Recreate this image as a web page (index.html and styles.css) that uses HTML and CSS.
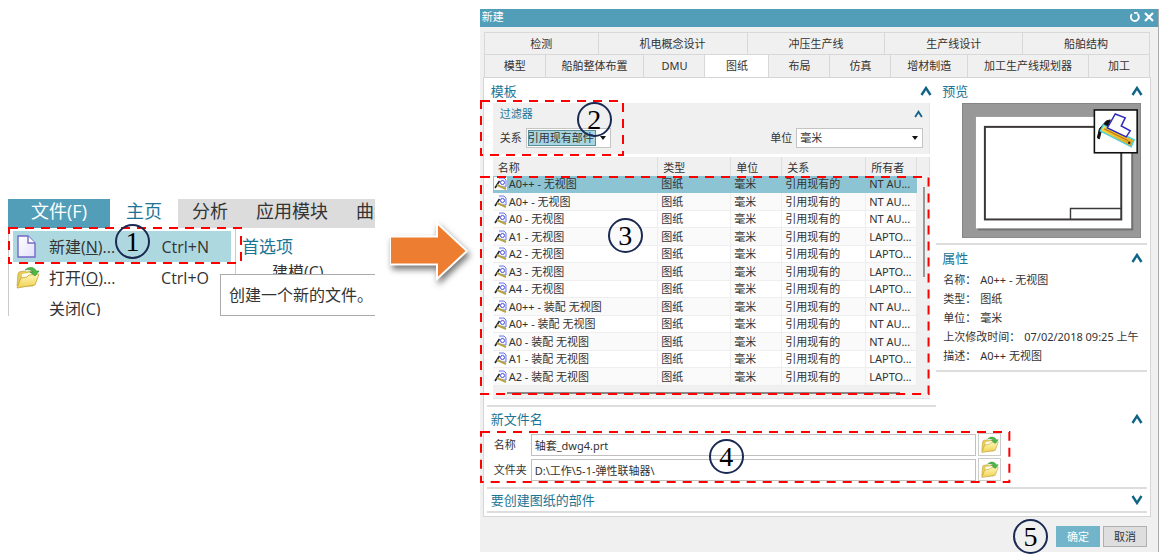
FILE: index.html
```html
<!DOCTYPE html>
<html lang="zh-CN">
<head>
<meta charset="utf-8">
<title>新建</title>
<link rel="stylesheet" href="styles.css">
</head>
<body>
<svg class="defs" width="0" height="0" aria-hidden="true">
  <defs>
    <linearGradient id="gold" x1="0" y1="0" x2="0" y2="1"><stop offset="0" stop-color="#fff8b8"/><stop offset="1" stop-color="#f0d050"/></linearGradient>
    <linearGradient id="ruler" x1="0" y1="0" x2="0" y2="1"><stop offset="0" stop-color="#ffe84a"/><stop offset="1" stop-color="#e09a18"/></linearGradient>
    <linearGradient id="paper" x1="0" y1="0" x2="1" y2="1"><stop offset="0" stop-color="#ffffff"/><stop offset="1" stop-color="#e2e0fb"/></linearGradient>
  </defs>
  <symbol id="folder" viewBox="0 0 24 24">
    <path d="M1 20L2 8l1-2 5-1 2 1 8-1-1 15z" fill="#e6cc58" stroke="#c0a03a" stroke-width=".7"/>
    <path d="M6 8l12-2v9H6z" fill="#fffde8"/>
    <path d="M1 22L5 12l6-1 2-2 10-1-4 11z" fill="url(#gold)" stroke="#c4a43a" stroke-width=".8"/>
    <path d="M9 4c4-4 10-3 11 1h3l-4 5-5-4h3c-1-2-5-3-8-2z" fill="#4db848" stroke="#2b8a30" stroke-width=".6"/>
  </symbol>
  <symbol id="up" viewBox="0 0 12 10"><path d="M1.500 9L6 2l4.500 7" fill="none" stroke="#0f6488" stroke-width="2.400"/></symbol>
  <symbol id="down" viewBox="0 0 12 10"><path d="M1.500 1L6 8l4.500-7" fill="none" stroke="#0f6488" stroke-width="2.400"/></symbol>
  <symbol id="sheet" viewBox="0 0 13 13">
    <path d="M5 1h5l2 2v7H7" fill="#eef0ff" stroke="#6a78e8"/>
    <circle cx="8.500" cy="5.500" r="2" fill="#fff" stroke="#4a50e0"/>
    <path d="M1 11L5.500 4" stroke="#222" stroke-width="1.600"/>
    <path d="M3 8l9 4" stroke="#b5a545" stroke-width="2"/>
  </symbol>
  <symbol id="caret" viewBox="0 0 6 4"><path d="M0 0h6L3 4z" fill="#111"/></symbol>
</svg>

<main class="stage">
  <section class="app">
    <div class="crop">
      <nav class="ribbon">
        <button class="ribbon-tab file">文件(F)</button>
        <button class="ribbon-tab home">主页</button>
        <button class="ribbon-tab">分析</button>
        <button class="ribbon-tab">应用模块</button>
        <button class="ribbon-tab">曲线</button>
      </nav>
      <div class="app-body">
        <div class="menu">
          <button class="menu-item current">
            <svg class="menu-icon" viewBox="0 0 24 24"><path d="M2 1h10l7 7v14H2z" fill="url(#paper)" stroke="#7468c8" stroke-width="1.400"/><path d="M12 1v7h7" fill="#fff" stroke="#7468c8" stroke-width="1.400"/></svg>
            <span class="menu-label">新建(<u>N</u>)...</span><span>Ctrl+N</span>
          </button>
          <button class="menu-item">
            <svg class="menu-icon"><use href="#folder"/></svg>
            <span class="menu-label">打开(<u>O</u>)...</span><span>Ctrl+O</span>
          </button>
          <button class="menu-item"><span class="menu-icon"></span><span class="menu-label">关闭(C)</span></button>
          <div class="mark mark-menu"><svg class="dash"><rect x="1" y="1"/></svg><span class="badge">1</span></div>
        </div>
        <div class="submenu">
          <h2>首选项</h2>
          <p>建模(C)</p>
        </div>
      </div>
      <div class="tooltip" role="tooltip">创建一个新的文件。</div>
    </div>
  </section>

  <svg class="arrow" viewBox="0 0 80 68"><path d="M0 15.500h47V2l30 28-30 28V43.500H0z" fill="#ed7d31" stroke="#fff" stroke-width="2"/></svg>

  <section class="dialog">
    <header class="titlebar">
      <h1>新建</h1>
      <button aria-label="重置"><svg viewBox="0 0 12 12"><path d="M3 3.200A4 4 0 1 0 8.500 3M5 1.800H8.700" fill="none" stroke="#fff" stroke-width="1.800"/></svg></button>
      <button aria-label="关闭"><svg viewBox="0 0 12 12"><path d="M2 2l8 8M10 2l-8 8" stroke="#fff" stroke-width="2.200"/></svg></button>
    </header>
    <div class="tabs">
      <div class="tab-row upper">
        <button>检测</button><button>机电概念设计</button><button>冲压生产线</button><button>生产线设计</button><button>船舶结构</button>
      </div>
      <div class="tab-row">
        <button>模型</button><button>船舶整体布置</button><button>DMU</button><button class="active">图纸</button><button>布局</button><button>仿真</button><button>增材制造</button><button>加工生产线规划器</button><button>加工</button>
      </div>
    </div>
    <div class="panel">
      <div class="columns">
        <div class="left">
          <div class="section-head"><h2>模板</h2><svg><use href="#up"/></svg></div>
          <div class="filter">
            <div class="filter-head"><h3>过滤器</h3><svg><use href="#up"/></svg></div>
            <div class="filter-row">
              <label for="rel">关系</label>
              <span class="combo picked"><select id="rel"><option>引用现有部件</option></select><svg><use href="#caret"/></svg></span>
              <label for="unit" class="push">单位</label>
              <span class="combo unit"><select id="unit"><option>毫米</option></select><svg><use href="#caret"/></svg></span>
            </div>
            <div class="mark mark-filter"><svg class="dash"><rect x="1" y="1"/></svg><span class="badge">2</span></div>
          </div>
          <div class="list">
            <table>
              <colgroup><col><col class="c-type"><col class="c-unit"><col class="c-rel"><col class="c-owner"><col class="c-bar"></colgroup>
              <thead><tr><th>名称</th><th>类型</th><th>单位</th><th>关系</th><th>所有者</th><th></th></tr></thead>
              <tbody>
                <tr class="selected"><td><svg><use href="#sheet"/></svg>A0++ - 无视图</td><td>图纸</td><td>毫米</td><td>引用现有的</td><td>NT AU...</td><td class="track" rowspan="12"><div class="thumb"></div></td></tr>
                <tr><td><svg><use href="#sheet"/></svg>A0+ - 无视图</td><td>图纸</td><td>毫米</td><td>引用现有的</td><td>NT AU...</td></tr>
                <tr><td><svg><use href="#sheet"/></svg>A0 - 无视图</td><td>图纸</td><td>毫米</td><td>引用现有的</td><td>NT AU...</td></tr>
                <tr><td><svg><use href="#sheet"/></svg>A1 - 无视图</td><td>图纸</td><td>毫米</td><td>引用现有的</td><td>LAPTO...</td></tr>
                <tr><td><svg><use href="#sheet"/></svg>A2 - 无视图</td><td>图纸</td><td>毫米</td><td>引用现有的</td><td>LAPTO...</td></tr>
                <tr><td><svg><use href="#sheet"/></svg>A3 - 无视图</td><td>图纸</td><td>毫米</td><td>引用现有的</td><td>LAPTO...</td></tr>
                <tr><td><svg><use href="#sheet"/></svg>A4 - 无视图</td><td>图纸</td><td>毫米</td><td>引用现有的</td><td>LAPTO...</td></tr>
                <tr><td><svg><use href="#sheet"/></svg>A0++ - 装配 无视图</td><td>图纸</td><td>毫米</td><td>引用现有的</td><td>NT AU...</td></tr>
                <tr><td><svg><use href="#sheet"/></svg>A0+ - 装配 无视图</td><td>图纸</td><td>毫米</td><td>引用现有的</td><td>NT AU...</td></tr>
                <tr><td><svg><use href="#sheet"/></svg>A0 - 装配 无视图</td><td>图纸</td><td>毫米</td><td>引用现有的</td><td>NT AU...</td></tr>
                <tr><td><svg><use href="#sheet"/></svg>A1 - 装配 无视图</td><td>图纸</td><td>毫米</td><td>引用现有的</td><td>LAPTO...</td></tr>
                <tr><td><svg><use href="#sheet"/></svg>A2 - 装配 无视图</td><td>图纸</td><td>毫米</td><td>引用现有的</td><td>LAPTO...</td></tr>
              </tbody>
            </table>
            <div class="hbar"><div class="hthumb"></div></div>
            <div class="mark mark-list"><svg class="dash"><rect x="1" y="1"/></svg><span class="badge">3</span></div>
          </div>
        </div>
        <div class="right">
          <div class="section-head"><h2>预览</h2><svg><use href="#up"/></svg></div>
          <svg class="preview" viewBox="0 0 180 136">
            <rect width="180" height="136" fill="#989898"/>
            <rect x=".5" y=".5" width="179" height="135" fill="none" stroke="#858585"/>
            <rect x="16" y="16" width="156" height="112" fill="#707070"/>
            <rect x="14" y="14" width="156" height="112" fill="#fff"/>
            <rect x="23" y="24" width="137" height="93" fill="none" stroke="#3c3838" stroke-width="2"/>
            <path d="M109 117v-11h51" fill="none" stroke="#3c3838" stroke-width="1.400"/>
            <rect x="133" y="7" width="43" height="43" fill="#fff" stroke="#111" stroke-width="1.600"/>
            <path d="M136 35l2-9 7-8 4-1-3 8-6 3-2 8z" fill="#111" stroke="#111"/>
            <path d="M142 22l31 15-3 7-31-16z" fill="url(#ruler)" stroke="#4cd0e0" stroke-width="1.400"/>
            <path d="M143 26l24 12" stroke="#c07c10" stroke-width="1.200"/><circle cx="168" cy="40" r="1.200" fill="#222"/>
            <path d="M154 11l10 4-4 8 9 5-4 6-19-9z" fill="#fff" stroke="#2d28c0" stroke-width="1.500"/>
          </svg>
          <div class="properties">
            <div class="section-head"><h2>属性</h2><svg><use href="#up"/></svg></div>
            <dl>
              <div><dt>名称：</dt><dd>A0++ - 无视图</dd></div>
              <div><dt>类型：</dt><dd>图纸</dd></div>
              <div><dt>单位：</dt><dd>毫米</dd></div>
              <div><dt>上次修改时间：</dt><dd>07/02/2018 09:25 上午</dd></div>
              <div><dt>描述：</dt><dd>A0++ 无视图</dd></div>
            </dl>
          </div>
        </div>
      </div>
      <div class="newfile">
        <div class="section-head"><h2>新文件名</h2><svg><use href="#up"/></svg></div>
        <div class="fields">
          <label for="fname">名称</label><input id="fname" type="text" value="轴套_dwg4.prt"><button aria-label="浏览名称"><svg><use href="#folder"/></svg></button>
          <label for="fdir">文件夹</label><input id="fdir" type="text" value="D:\工作\5-1-弹性联轴器\"><button aria-label="浏览文件夹"><svg><use href="#folder"/></svg></button>
          <div class="mark mark-fields"><svg class="dash"><rect x="1" y="1"/></svg><span class="badge">4</span></div>
        </div>
      </div>
      <div class="parts"><div class="section-head"><h2>要创建图纸的部件</h2><svg><use href="#down"/></svg></div></div>
    </div>
    <footer class="actions">
      <span class="badge step">5</span>
      <button class="primary">确定</button>
      <button>取消</button>
    </footer>
  </section>
</main>
</body>
</html>
```

FILE: styles.css
```css
* { box-sizing: border-box; }

body {
  margin: 0;
  background: #fff;
  color: #333;
  font: 11px/16px "Noto Sans", "Noto Sans CJK SC", sans-serif;
}

h1, h2, h3, p, dl, dd { margin: 0; font-weight: 400; }
button, input, select { font: inherit; color: inherit; border: 0; margin: 0; padding: 0; background: none; border-radius: 0; }
.defs { position: absolute; }

.stage {
  display: flex;
  align-items: center;
  padding: 9px 15px 7px 8px;
}

/* File menu */
.app { flex: 367 1 0; min-width: 0; padding-bottom: 46px; font-family: "Open Sans", "Noto Sans CJK SC", sans-serif; }
.crop { position: relative; height: 117px; overflow: hidden; font-size: 16px; line-height: 24px; }
.ribbon { display: flex; background: #dcdcdc; height: 29px; overflow: hidden; }
.ribbon-tab { flex: none; padding: 0 14px 5px; font-size: 18px; line-height: 24px; white-space: nowrap; }
.ribbon-tab.file { width: 102px; background: #529eb8; color: #fff; }
.ribbon-tab.home { width: 68px; background: #fff; color: #1b7595; }
.app-body { display: flex; }
.menu { position: relative; width: 228px; padding: 3px 4px; border: solid #ccc; border-width: 0 1px; }
.menu-item { display: flex; align-items: center; width: 100%; height: 31px; padding: 0 22px 0 3px; text-align: left; }
.menu-item.current { background: #aed8e0; }
.menu-icon { width: 24px; height: 24px; margin-right: 9px; flex: none; }
.menu-label { flex: 1; }
.submenu { padding: 6px; }
.submenu h2 { font-size: 17px; line-height: 26px; color: #1b7595; }
.submenu p { padding-left: 30px; }
.tooltip {
  position: absolute;
  left: 212px;
  right: 0;
  top: 75px;
  padding: 8px 0 8px 8px;
  border: solid #aaa;
  border-width: 1px 0 1px 1px;
  background: #fff;
  line-height: 24px;
  white-space: nowrap;
}

.arrow { flex: none; width: 80px; height: 68px; margin: 0 10px 52px 15px; filter: drop-shadow(2px 4px 3px #777); }

/* Step marks */
.mark { position: absolute; pointer-events: none; z-index: 1; }
.dash { display: block; width: 100%; height: 100%; overflow: visible; }
.dash rect { width: 100%; height: 100%; fill: none; stroke: #f00; stroke-width: 2px; stroke-dasharray: 9 7; }
.badge {
  display: block;
  width: 35px;
  height: 35px;
  border: 2px solid #1b2a52;
  border-radius: 50%;
  color: #000;
  font: 28px/31px "Liberation Serif", serif;
  text-align: center;
}
.mark .badge { position: absolute; }
.mark-menu { left: -1px; right: -5px; top: -1px; height: 35px; }
.mark-menu .badge { left: 107px; top: -3px; }
.mark-filter { left: -13px; top: -3px; width: 142px; bottom: 0; }
.mark-filter .badge { right: 10px; top: 2px; }
.mark-list { left: -13px; right: 3px; top: 19px; bottom: 6px; }
.mark-list .badge { left: 128px; top: 42px; }
.mark-fields { left: -7px; right: -7px; top: 0; bottom: 0; }
.mark-fields .badge { left: 229px; top: 8px; }

/* Dialog */
.dialog { flex: 679 1 0; min-width: 0; background: #f0f0f0; border-right: 1px solid #aaa; }
.titlebar { display: flex; align-items: center; gap: 2px; height: 18px; padding: 0 3px 2px 2px; background: #529eb8; color: #fff; }
.titlebar h1 { flex: 1; font-size: 11px; line-height: 16px; }
.titlebar button { width: 12px; height: 12px; }
.titlebar svg { display: block; }

.tabs { padding: 5px 8px 0 4px; }
.tab-row { display: flex; border-left: 1px solid #d8d8d8; }
.tab-row button {
  flex: 1 1 auto;
  min-width: 61px;
  height: 23px;
  padding: 0 15px;
  border: solid #d8d8d8;
  border-width: 1px 1px 0 0;
  white-space: nowrap;
}
.tab-row.upper button { height: 22px; min-width: 114px; }
.tab-row .active { min-width: 64px; background: #fff; }

.panel { margin: 0 7px 0 3px; padding: 0 3px 3px; border: 1px solid #d5d5d5; background: #fff; }
.columns { display: grid; grid-template-columns: 450fr 211fr; }
.section-head { display: flex; align-items: center; justify-content: space-between; height: 24px; padding: 0 4px; }
.section-head h2 { font-size: 13px; line-height: 20px; color: #1b7595; }
.section-head svg { width: 12px; height: 10px; }
.left { min-width: 0; padding-bottom: 6px; border-bottom: 2px solid #ddd; }
.left .section-head, .right .section-head { height: 25px; }
.right .section-head { padding-left: 6px; }

.filter { position: relative; margin: 0 6px 3px; padding: 2px 6px 6px 7px; background: #f0f0f0; border: 1px solid #e6e6e6; border-width: 0 1px 0 0; }
.filter-head { display: flex; align-items: center; justify-content: space-between; height: 18px; }
.filter-head h3 { font-size: 11px; color: #1b7595; }
.filter-head svg { width: 9px; height: 8px; }
.filter-row { display: flex; align-items: center; gap: 4px; padding-top: 5px; }
.push { margin-left: auto; }
.combo { display: flex; align-items: center; width: 85px; height: 20px; padding: 1px; border: 1px solid #c4c4c4; background: #fff; }
.combo select { appearance: none; flex: 1; min-width: 0; height: 16px; line-height: 16px; }
.combo svg { width: 6px; height: 4px; margin: 0 3px 0 4px; flex: none; }
.combo.picked select { background: #a9d5e0; outline: 1px solid #5a8e9c; outline-offset: -1px; }
.combo.unit { width: 127px; padding-left: 3px; }

.list { position: relative; margin: 0 6px; background: #f0f0f0; }
table { width: 100%; table-layout: fixed; border-collapse: separate; border-spacing: 0; }
.c-type { width: 73px; }
.c-unit { width: 51px; }
.c-rel { width: 84px; }
.c-owner { width: 51px; }
.c-bar { width: 13px; }
th { height: 19px; padding: 2px 0 0 5px; border-right: 1px solid #dedede; text-align: left; font-weight: 400; line-height: 16px; white-space: nowrap; }
td { height: 17px; padding: 0 0 0 3px; border-right: 1px solid #eee; border-bottom: 1px solid #eee; background: #fff; line-height: 16px; white-space: nowrap; }
tr:nth-child(even) td { height: 18px; }
tr:nth-child(even) td { background: #fafafa; }
td:first-child { padding-left: 1px; }
td svg { width: 13px; height: 13px; margin-right: 2px; vertical-align: -2px; background: #fff; }
.selected td { background: #8cc4d3; border-color: #8cc4d3; }
tbody .track { padding: 11px 0 0 6px; background: #f0f0f0; border: 0; vertical-align: top; }
.thumb { width: 2px; height: 90px; background: #999; }
.hbar { height: 13px; padding: 6px 30px 0 14px; border-bottom: 1px solid #e4e4e4; }
.hthumb { height: 2px; background: #888; }

.preview { display: block; width: 85%; height: auto; margin: 0 6px 5px auto; }
.properties { border: solid #ddd; border-width: 2px 0; padding-bottom: 5px; }
dl { padding-left: 7px; white-space: nowrap; }
dl div { display: flex; gap: 4px; height: 19px; align-items: center; }

.fields {
  position: relative;
  display: grid;
  grid-template-columns: 36px 1fr 23px;
  align-items: center;
  row-gap: 2px;
  margin-right: 146px;
  padding: 2px 0 0 7px;
}
.fields input { justify-self: start; width: calc(100% - 3px); min-width: 0; height: 22px; margin-left: 1px; padding: 0 3px; border: 1px solid #c0c0c0; background: #fff; }
.fields button { height: 23px; border: 1px solid #ccc; background: #fff; }
.fields label { white-space: nowrap; }
.fields button svg { display: block; width: 18px; height: 18px; margin: 0 auto; }
.parts { margin-top: 6px; border: solid #ddd; border-width: 2px 0; }
.parts .section-head { height: 22px; }

.actions { display: flex; align-items: center; justify-content: flex-end; gap: 3px; height: 35px; padding: 4px 11px 0 0; }
.actions button { width: 44px; height: 21px; border: 1px solid #b0b0b0; background: #dedede; }
.actions .primary { border-color: #72b5cb; background: #72b5cb; color: #fff; }
.step { margin-right: 5px; }
```
